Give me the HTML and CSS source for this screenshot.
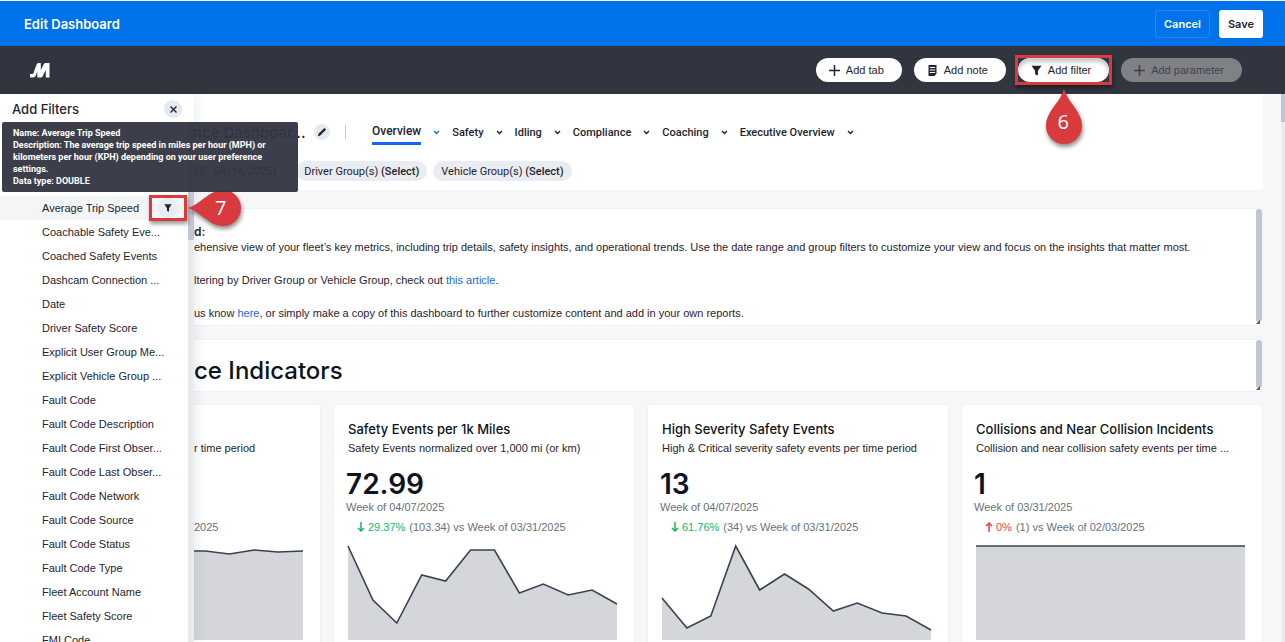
FILE: index.html
```html
<!DOCTYPE html>
<html lang="en">
<head>
  <meta charset="UTF-8">
  <title>Edit Dashboard</title>
  <link rel="stylesheet" href="styles.css">
</head>
<body>
  <header class="edit-bar">
    <h1>Edit Dashboard</h1>
    <button class="btn btn-cancel" type="button">Cancel</button>
    <button class="btn btn-save" type="button">Save</button>
  </header>

  <div class="toolbar">
    <svg class="logo" width="20" height="15" viewBox="0 0 20 15" aria-hidden="true">
      <path d="M0 14.500V11h2c.8 0 1.200-.3 1.500-1L6.600 1.600C7 .6 7.700 0 8.700 0h2.100v7.200L13.500 1.500C14.100.5 14.800 0 15.900 0H19.500v14.500H15.800V6.800l-3 6.200c-.6 1-1.200 1.500-2.200 1.500H7.300V8.400L6 12c-.7 1.800-1.600 2.500-3.300 2.500z" fill="#fff"/>
    </svg>
    <button class="pill" type="button">
      <svg width="11" height="11" viewBox="0 0 11 11"><path d="M5.500 0v11M0 5.500h11" stroke="#1f2430" stroke-width="1.500"/></svg>
      Add tab
    </button>
    <button class="pill" type="button">
      <svg width="11" height="11" viewBox="0 0 11 11"><path d="M1.500 0h8v8.500L7.500 11h-6z" fill="#1f2430"/><path d="M2.800 2.500h5.400M2.800 5h5.400M2.800 7.500h5.400" stroke="#fff"/></svg>
      Add note
    </button>
    <div class="marked">
      <button class="pill pill-active" type="button">
        <svg width="11" height="11" viewBox="0 0 11 11"><path d="M.5.800h10L6.900 5.700v4.900L4.100 9.200V5.700z" fill="#1f2430"/></svg>
        Add filter
      </button>
      <span class="frame frame-filter"></span>
      <div class="pin pin-down">
        <svg width="38" height="56" viewBox="0 0 38 56"><path d="M19 0C21 6 24 11 28 16C33 23 37 29 37 37a18 18 0 0 1-36 0C1 29 5 23 10 16C14 11 17 6 19 0z" fill="#d93a3d"/></svg>
        <span>6</span>
      </div>
    </div>
    <button class="pill" type="button" disabled>
      <svg width="11" height="11" viewBox="0 0 11 11"><path d="M5.500 0v11M0 5.500h11" stroke="#3f424a" stroke-width="1.500"/></svg>
      Add parameter
    </button>
  </div>

  <div class="workspace">
    <main>
      <section class="dash-head">
        <div class="title-row">
          <h2>nce Dashboar...</h2>
          <button class="round edit" type="button" aria-label="Rename">
            <svg width="10" height="10" viewBox="0 0 10 10"><path d="M.8 9.200l.7-2.400L7.400.900l1.700 1.700-5.900 5.900z" fill="#1f2430"/></svg>
          </button>
          <nav class="tabs">
            <a class="active" href="#overview">Overview</a>
            <svg class="chev blue" width="7" height="5" viewBox="0 0 7 5"><path d="M1 1l2.500 2.500L6 1"/></svg>
            <a href="#safety">Safety</a>
            <svg class="chev" width="7" height="5" viewBox="0 0 7 5"><path d="M1 1l2.500 2.500L6 1"/></svg>
            <a href="#idling">Idling</a>
            <svg class="chev" width="7" height="5" viewBox="0 0 7 5"><path d="M1 1l2.500 2.500L6 1"/></svg>
            <a href="#compliance">Compliance</a>
            <svg class="chev" width="7" height="5" viewBox="0 0 7 5"><path d="M1 1l2.500 2.500L6 1"/></svg>
            <a href="#coaching">Coaching</a>
            <svg class="chev" width="7" height="5" viewBox="0 0 7 5"><path d="M1 1l2.500 2.500L6 1"/></svg>
            <a href="#executive">Executive Overview</a>
            <svg class="chev" width="7" height="5" viewBox="0 0 7 5"><path d="M1 1l2.500 2.500L6 1"/></svg>
          </nav>
        </div>
        <div class="chips">
          <button class="chip chip-date" type="button">25 - 04/14/2025)</button>
          <button class="chip" type="button">Driver Group(s) <b>(Select)</b></button>
          <button class="chip" type="button">Vehicle Group(s) <b>(Select)</b></button>
        </div>
      </section>

      <section class="note note-text">
        <h3>d:</h3>
        <p>ehensive view of your fleet’s key metrics, including trip details, safety insights, and operational trends. Use the date range and group filters to customize your view and focus on the insights that matter most.</p>
        <p>ltering by Driver Group or Vehicle Group, check out <a href="#article">this article</a>.</p>
        <p>us know <a href="#here">here</a>, or simply make a copy of this dashboard to further customize content and add in your own reports.</p>
        <span class="thumb"></span>
      </section>

      <section class="note note-heading">
        <h2>ce Indicators</h2>
        <span class="thumb"></span>
      </section>

      <section class="kpis">
        <article class="kpi kpi-covered">
          <p class="sub">r time period</p>
          <p class="delta">2025</p>
          <svg class="chart" viewBox="0 0 270 96" preserveAspectRatio="none">
            <path class="area" d="M0 7H172L196 10L221 6L245 8L270 7V96H0z"/>
            <path class="line" d="M0 7H172L196 10L221 6L245 8L270 7"/>
          </svg>
        </article>
        <article class="kpi">
          <h3>Safety Events per 1k Miles</h3>
          <p class="sub">Safety Events normalized over 1,000 mi (or km)</p>
          <p class="value">72.99</p>
          <p class="week">Week of 04/07/2025</p>
          <p class="delta"><span class="good"><svg width="8" height="10" viewBox="0 0 8 10"><path d="M4 0v9M1 6l3 3 3-3"/></svg>29.37%</span>(103.34) vs Week of 03/31/2025</p>
          <svg class="chart" viewBox="0 0 270 96" preserveAspectRatio="none">
            <path class="area" d="M0 2L25 56L49 79L74 31L98 37L123 6L147 6L172 49L196 40L221 51L245 46L270 60V96H0z"/>
            <path class="line" d="M0 2L25 56L49 79L74 31L98 37L123 6L147 6L172 49L196 40L221 51L245 46L270 60"/>
          </svg>
        </article>
        <article class="kpi">
          <h3>High Severity Safety Events</h3>
          <p class="sub">High &amp; Critical severity safety events per time period</p>
          <p class="value">13</p>
          <p class="week">Week of 04/07/2025</p>
          <p class="delta"><span class="good"><svg width="8" height="10" viewBox="0 0 8 10"><path d="M4 0v9M1 6l3 3 3-3"/></svg>61.76%</span>(34) vs Week of 03/31/2025</p>
          <svg class="chart" viewBox="0 0 270 96" preserveAspectRatio="none">
            <path class="area" d="M0 54L25 84L49 72L74 2L98 46L123 30L147 45L172 67L196 59L221 69L245 72L270 86V96H0z"/>
            <path class="line" d="M0 54L25 84L49 72L74 2L98 46L123 30L147 45L172 67L196 59L221 69L245 72L270 86"/>
          </svg>
        </article>
        <article class="kpi">
          <h3>Collisions and Near Collision Incidents</h3>
          <p class="sub">Collision and near collision safety events per time ...</p>
          <p class="value">1</p>
          <p class="week">Week of 03/31/2025</p>
          <p class="delta"><span class="bad"><svg width="8" height="10" viewBox="0 0 8 10"><path d="M4 10V1M1 4l3-3 3 3"/></svg>0%</span>(1) vs Week of 02/03/2025</p>
          <svg class="chart" viewBox="0 0 270 96" preserveAspectRatio="none">
            <path class="area" d="M0 2H270V96H0z"/>
            <path class="line" d="M0 2H270"/>
          </svg>
        </article>
      </section>
    </main>
    <div class="page-scroll"><span></span></div>

    <!-- filter panel slides over the dashboard -->
    <aside class="panel">
      <div class="panel-head">
        <h2>Add Filters</h2>
        <button class="round" type="button" aria-label="Close">
          <svg width="7" height="7" viewBox="0 0 7 7"><path d="M.5.500l6 6M6.500.500l-6 6" stroke="#1f2430" stroke-width="1.400"/></svg>
        </button>
      </div>
      <div class="tooltip" role="tooltip">
        Name: Average Trip Speed<br>
        Description: The average trip speed in miles per hour (MPH) or<br>
        kilometers per hour (KPH) depending on your user preference<br>
        settings.<br>
        Data type: DOUBLE
      </div>
      <ul class="fields">
        <li class="selected">
          Average Trip Speed
          <div class="marked">
            <button class="add" type="button" aria-label="Add as filter">
              <svg width="8" height="8" viewBox="0 0 11 11"><path d="M.5.500h10L6.900 5.700v4.900L4.100 9.200V5.700z" fill="#1f2430"/></svg>
            </button>
            <span class="frame frame-add"></span>
            <div class="pin pin-left">
              <svg width="54" height="38" viewBox="0 0 54 38"><path d="M0 19C6 17 10 14 15 10C22 5 27 1 35 1a18 18 0 0 1 0 36C27 37 22 33 15 28C10 24 6 21 0 19z" fill="#d93a3d"/></svg>
              <span>7</span>
            </div>
          </div>
        </li>
        <li>Coachable Safety Eve...</li>
        <li>Coached Safety Events</li>
        <li>Dashcam Connection ...</li>
        <li>Date</li>
        <li>Driver Safety Score</li>
        <li>Explicit User Group Me...</li>
        <li>Explicit Vehicle Group ...</li>
        <li>Fault Code</li>
        <li>Fault Code Description</li>
        <li>Fault Code First Obser...</li>
        <li>Fault Code Last Obser...</li>
        <li>Fault Code Network</li>
        <li>Fault Code Source</li>
        <li>Fault Code Status</li>
        <li>Fault Code Type</li>
        <li>Fleet Account Name</li>
        <li>Fleet Safety Score</li>
        <li>FMI Code</li>
      </ul>
      <div class="panel-scroll"><span></span></div>
    </aside>
  </div>
</body>
</html>
```
FILE: styles.css
```css
* {
  box-sizing: border-box;
}
html, body {
  height: 100%;
}
body {
  margin: 0;
  padding-top: 1px;
  display: flex;
  flex-direction: column;
  overflow: hidden;
  background: #fff;
  color: #1f2430;
  font-family: "Liberation Sans", Arial, sans-serif;
  font-size: 11px;
}
h1, h2, h3, p, ul {
  margin: 0;
  padding: 0;
}
h1, h2, h3, .btn, .value {
  font-family: Inter, "Liberation Sans", sans-serif;
}
button {
  font-family: inherit;
  font-size: 11px;
  color: inherit;
  border: none;
  cursor: pointer;
}
a {
  color: #1b66e0;
  text-decoration: none;
}

/* top bars */
.edit-bar {
  flex: none;
  height: 45px;
  display: flex;
  align-items: center;
  gap: 9px;
  padding: 0 22px 0 24px;
  background: #0073ea;
}
.edit-bar h1 {
  margin-right: auto;
  color: #fff;
  font-size: 13px;
  font-weight: 600;
}
.btn {
  height: 28px;
  padding: 0 9px;
  border-radius: 3px;
  font-weight: 600;
}
.btn-cancel {
  padding: 0 8px;
  border: 1px solid #2288f2;
  background: transparent;
  color: #fff;
}
.btn-save {
  background: #fff;
}
.toolbar {
  flex: none;
  height: 48px;
  display: flex;
  align-items: center;
  gap: 12px;
  padding: 0 43px 0 30px;
  background: #31353f;
}
.logo {
  margin-right: auto;
}
.pill {
  height: 24px;
  display: flex;
  align-items: center;
  gap: 6px;
  padding: 0 18px 0 13px;
  border-radius: 12px;
  background: #fff;
}
.pill:disabled {
  background: #7f8186;
  color: #3f424a;
}
.pill-active {
  box-shadow: inset 0 4px 4px #c9c9cb;
}

/* callouts */
.marked {
  position: relative;
  z-index: 5;
}
.frame {
  position: absolute;
  border: 3px solid #d93a3d;
  box-shadow: 1px 3px 4px rgba(0, 0, 0, 0.4);
}
.frame-filter {
  inset: -3px;
}
.frame-add {
  inset: -3px -9px;
}
.pin {
  position: absolute;
  color: #fff;
  font-family: "Open Sans", sans-serif;
  font-size: 20px;
  line-height: 24px;
}
.pin svg {
  display: block;
  filter: drop-shadow(1px 3px 2px rgba(0, 0, 0, 0.45));
}
.pin span {
  position: absolute;
}
.pin-down {
  top: 31px;
  left: calc(50% - 19px);
}
.pin-down span {
  top: 21px;
  left: 13px;
}
.pin-left {
  top: -9px;
  left: 30px;
}
.pin-left span {
  top: 7px;
  left: 27px;
}

/* dashboard */
.workspace {
  position: relative;
  flex: 1;
  min-height: 0;
}
main {
  height: 100%;
  padding-right: 22px;
  overflow: hidden;
  background: #f6f7f9;
}
.dash-head {
  height: 96px;
  padding: 26px 0 0 193px;
  background: #fff;
  border-radius: 0 0 4px 0;
}
.title-row {
  height: 24px;
  display: flex;
  align-items: center;
}
.title-row h2 {
  width: 112px;
  font-size: 15px;
  font-weight: 500;
  white-space: nowrap;
}
.round {
  width: 18px;
  height: 18px;
  display: flex;
  align-items: center;
  justify-content: center;
  padding: 0;
  border-radius: 50%;
  background: #e6e9ef;
}
.edit {
  width: 16px;
  height: 16px;
  margin-left: 9px;
}
.tabs {
  display: flex;
  align-items: center;
  gap: 12px;
  margin-left: 15px;
  padding-left: 26px;
  border-left: 1px solid #c5cad3;
  height: 14px;
}
.tabs a {
  color: #1f2430;
  font-family: Roboto, sans-serif;
  font-weight: 500;
  white-space: nowrap;
}
.tabs .active {
  padding: 5px 0 4px;
  font-size: 12px;
  border-bottom: 3px solid #1464f6;
}
.chev {
  fill: none;
  stroke: #1f2430;
  stroke-width: 1.4;
}
.blue {
  stroke: #1464f6;
}
.chips {
  display: flex;
  gap: 6px;
  margin-top: 17px;
}
.chip {
  height: 20px;
  padding: 0 8px;
  border-radius: 10px;
  background: #e9ecf1;
  font-family: Roboto, sans-serif;
  white-space: nowrap;
}
.chip b {
  font-weight: 500;
}
.chip-date {
  padding: 0 14px 0 0;
}
.note {
  position: relative;
  margin-left: 19px;
  padding-left: 174px;
  background: #fff;
  border: 1px solid #f0f2f5;
}
.note-text {
  height: 118px;
  margin-top: 18px;
  padding-top: 16px;
}
.note-text h3 {
  font-size: 12px;
  line-height: 14px;
  font-weight: 600;
}
.note-text p {
  line-height: 16px;
  margin-bottom: 17px;
  white-space: nowrap;
}
.note-heading {
  height: 53px;
  margin-top: 13px;
  padding-top: 16px;
}
.note-heading h2 {
  font-size: 24px;
  line-height: 30px;
  font-weight: 500;
  color: #0d1320;
}
.thumb {
  position: absolute;
  top: 0;
  right: 0;
  bottom: 3px;
  width: 6px;
  border-radius: 3px;
  background: #c0c7d0;
}
/* resize corner under the scroll thumb */
.thumb::after {
  content: "";
  position: absolute;
  right: 2px;
  bottom: -2px;
  border: 2px solid;
  border-color: transparent #555a63 #555a63 transparent;
}
.kpis {
  display: grid;
  grid-template-columns: repeat(4, 1fr);
  gap: 12px;
  margin: 12px 0 0 19px;
}
.kpi {
  min-width: 0;
  display: grid;
  grid-template-rows: 20px 18px 42px 16px 24px 101px;
  align-items: center;
  padding: 14px 17px 20px 14px;
  background: #fff;
  border: 1px solid #f0f2f5;
  border-radius: 4px;
  white-space: nowrap;
}
.kpi h3 {
  font-size: 13px;
  font-weight: 500;
  color: #0d1320;
}
.sub {
  grid-row: 2;
}
.value {
  align-self: end;
  font-size: 28px;
  line-height: 30px;
  font-weight: 600;
  margin-left: -2px;
  color: #0d1320;
}
.week {
  margin-left: -2px;
  color: #6b707a;
}
.delta {
  grid-row: 5;
  display: flex;
  gap: 4px;
  margin-left: 9px;
  color: #6b707a;
}
.delta span {
  display: flex;
  align-items: center;
  gap: 3px;
}
.delta svg {
  fill: none;
  stroke: currentColor;
  stroke-width: 1.5;
}
.good {
  color: #12b76a;
}
.bad {
  color: #f03e4d;
}
.chart {
  grid-row: 6;
  align-self: end;
  width: 100%;
  height: 96px;
  overflow: visible;
}
.area {
  fill: #d5d6d9;
}
.line {
  fill: none;
  stroke: #3a4250;
  stroke-width: 1.6;
  vector-effect: non-scaling-stroke;
}
.kpi-covered .sub, .kpi-covered .delta {
  margin-left: 160px;
}
.page-scroll {
  position: absolute;
  top: 0;
  right: 0;
  bottom: 0;
  width: 4px;
  background: #e9edf2;
}
.page-scroll span {
  display: block;
  height: 28px;
  background: #c0c7d0;
}

/* filter panel */
.panel {
  position: absolute;
  top: 0;
  bottom: 0;
  left: 0;
  width: 194px;
  background: #fff;
  box-shadow: 3px 0 10px rgba(30, 40, 60, 0.08);
}
.panel-head {
  height: 30px;
  display: flex;
  align-items: center;
  justify-content: space-between;
  padding: 0 12px;
}
.panel-head h2 {
  font-size: 13px;
  font-weight: 500;
}
.tooltip {
  position: absolute;
  z-index: 3;
  top: 28px;
  left: 2px;
  width: 296px;
  padding: 5px 11px;
  background: rgba(49, 53, 65, 0.95);
  border-radius: 2px;
  color: #fff;
  font-family: Roboto, sans-serif;
  font-size: 9px;
  line-height: 12px;
  font-weight: bold;
  white-space: nowrap;
}
.fields {
  position: absolute;
  top: 102px;
  right: 6px;
  bottom: 0;
  left: 0;
  z-index: 2;
  list-style: none;
}
.fields li {
  height: 24px;
  display: flex;
  align-items: center;
  justify-content: space-between;
  padding: 0 10px 0 42px;
  white-space: nowrap;
}
.fields .selected {
  background: #f4f5f7;
}
.add {
  width: 20px;
  height: 20px;
  display: flex;
  align-items: center;
  justify-content: center;
  padding: 0;
  border-radius: 50%;
  background: #e9ecf1;
}
.panel-scroll {
  position: absolute;
  top: 28px;
  right: 0;
  bottom: 0;
  width: 6px;
  background: #e8ecf1;
}
.panel-scroll span {
  display: block;
  height: 118px;
  background: #c0c7d0;
}
```
